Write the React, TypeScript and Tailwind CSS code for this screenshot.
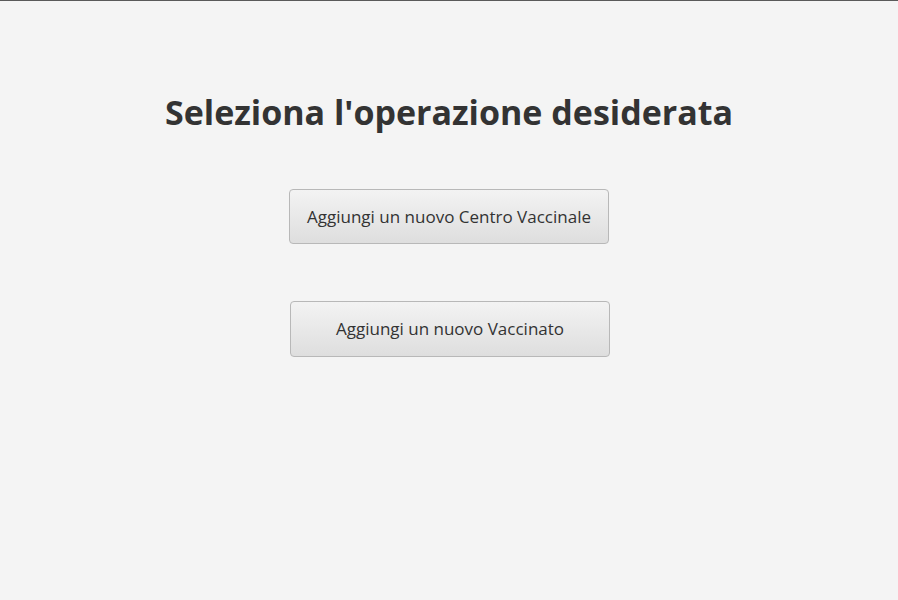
export default function App() {
  return (
    <div
      className="flex h-[600px] w-full flex-col items-center border-t border-[#5a5a5a] bg-[#f4f4f4] text-[#333333]"
      style={{ fontFamily: '"Open Sans", "Noto Sans", sans-serif' }}
    >
      <h1 className="mt-[87px] text-[34px] font-bold leading-[48px]">
        Seleziona l'operazione desiderata
      </h1>

      <button className="mt-[53px] h-[55px] w-[320px] rounded-[4px] border border-[#b8b8b8] bg-gradient-to-b from-[#f3f3f3] to-[#dedede] text-[17px] text-[#333333]">
        Aggiungi un nuovo Centro Vaccinale
      </button>

      <button className="ml-[2px] mt-[57px] h-[56px] w-[320px] rounded-[4px] border border-[#b8b8b8] bg-gradient-to-b from-[#f3f3f3] to-[#dedede] text-[17px] text-[#333333]">
        Aggiungi un nuovo Vaccinato
      </button>
    </div>
  );
}
